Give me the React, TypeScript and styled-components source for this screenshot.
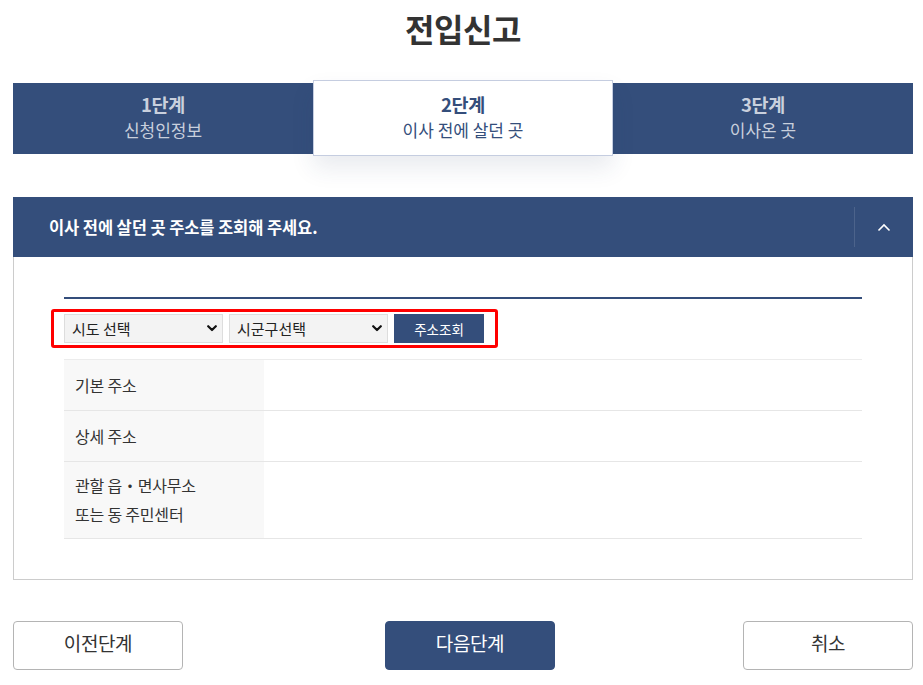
import React from "react";
import styled, { createGlobalStyle, css } from "styled-components";

const NAVY = "#344e7b";

const GlobalStyle = createGlobalStyle`
  html, body { margin: 0; padding: 0; background: #fff; }
  body { font-family: "Noto Sans CJK KR", "Noto Sans", sans-serif; color: #333; }
  * { box-sizing: border-box; }
`;

const Page = styled.div`
  width: 900px;
  margin-left: 13px;
  padding-top: 8px;
`;

const Title = styled.h1`
  margin: 0 0 35px;
  text-align: center;
  font-size: 32px;
  line-height: 40px;
  font-weight: 700;
  color: #333;
  letter-spacing: -0.5px;
`;

const Steps = styled.ol`
  list-style: none;
  margin: 0;
  padding: 0;
  display: grid;
  grid-template-columns: 300px 300px 300px;
  height: 71px;
  background: ${NAVY};
`;

const Step = styled.li<{ $active?: boolean }>`
  display: flex;
  flex-direction: column;
  align-items: center;
  justify-content: center;
  padding-bottom: 4px;
  color: #c9d0dd;
  ${(p) =>
    p.$active &&
    css`
      margin: -3px 0 -2px;
      padding-bottom: 3px;
      background: #fff;
      border: 1px solid #c5cde0;
      box-shadow: 0 12px 22px rgba(40, 60, 100, 0.1);
      color: ${NAVY};
    `}
`;

const StepNum = styled.span`
  font-size: 18.5px;
  line-height: 26px;
  font-weight: 700;
  letter-spacing: -0.3px;
`;

const StepName = styled.span`
  font-size: 17px;
  line-height: 25px;
  font-weight: 400;
  letter-spacing: 0;
`;

const Panel = styled.section`
  margin-top: 43px;
`;

const PanelHeader = styled.div`
  height: 60px;
  background: ${NAVY};
  display: flex;
  align-items: center;
  padding-left: 36px;
`;

const PanelTitle = styled.h2`
  flex: 1;
  margin: 0;
  font-size: 16.5px;
  font-weight: 700;
  color: #fff;
  letter-spacing: -0.1px;
`;

const Toggle = styled.button`
  width: 59px;
  height: 40px;
  border: 0;
  border-left: 1px solid rgba(255, 255, 255, 0.12);
  background: transparent;
  display: flex;
  align-items: center;
  justify-content: center;
  padding: 0;
  cursor: pointer;
`;

const PanelBody = styled.div`
  border: 1px solid #cccccc;
  border-top: 0;
  padding: 40px 50px 40px;
`;

const Rule = styled.div`
  height: 2px;
  background: ${NAVY};
`;

const SearchRow = styled.div`
  position: relative;
  display: flex;
  gap: 6px;
  margin-top: 15px;
  width: fit-content;
`;

const Highlight = styled.div`
  position: absolute;
  left: -13px;
  top: -5px;
  right: -14px;
  bottom: -5px;
  border: 3px solid #ff0000;
  border-radius: 3px;
  pointer-events: none;
`;

const SelectBox = styled.div`
  position: relative;
  width: 159px;
  height: 29px;
`;

const Select = styled.select`
  appearance: none;
  -webkit-appearance: none;
  width: 100%;
  height: 100%;
  background: #f3f3f3;
  border: 1px solid #dddddd;
  border-radius: 0;
  padding: 0 24px 0 7px;
  font-family: "Noto Sans CJK KR", "Noto Sans", sans-serif;
  font-size: 15px;
  color: #222;
  outline: none;
`;

const Caret = styled.svg`
  position: absolute;
  right: 6px;
  top: 11px;
  pointer-events: none;
`;

const SearchButton = styled.button`
  width: 90px;
  height: 29px;
  border: 0;
  background: ${NAVY};
  color: #fff;
  font-family: "Noto Sans CJK KR", "Noto Sans", sans-serif;
  font-size: 13.5px;
  padding: 0;
  cursor: pointer;
`;

const Table = styled.div`
  margin-top: 16px;
  border-top: 1px solid #ececec;
`;

const Row = styled.div`
  display: grid;
  grid-template-columns: 200px 1fr;
  border-bottom: 1px solid #e6e6e6;
`;

const Label = styled.div<{ $tall?: boolean }>`
  background: #f8f8f8;
  min-height: ${(p) => (p.$tall ? "76px" : "50px")};
  display: flex;
  align-items: center;
  padding: 0 11px;
  font-size: 16px;
  line-height: 29px;
  color: #333;
  letter-spacing: -0.2px;
`;

const Value = styled.div``;

const Footer = styled.div`
  margin-top: 41px;
  display: flex;
  justify-content: space-between;
  padding-bottom: 16px;
`;

const ActionButton = styled.button<{ $primary?: boolean; $shift?: number }>`
  width: 170px;
  height: 49px;
  border-radius: 4px;
  font-family: "Noto Sans CJK KR", "Noto Sans", sans-serif;
  font-size: 19px;
  letter-spacing: -0.4px;
  padding: 0 0 6px;
  cursor: pointer;
  margin-left: ${(p) => p.$shift ?? 0}px;
  ${(p) =>
    p.$primary
      ? css`
          background: ${NAVY};
          border: 1px solid ${NAVY};
          color: #fff;
        `
      : css`
          background: #fff;
          border: 1px solid #b4b4b4;
          color: #333;
        `}
`;

const steps = [
  { num: "1단계", name: "신청인정보" },
  { num: "2단계", name: "이사 전에 살던 곳", active: true },
  { num: "3단계", name: "이사온 곳" },
];

const CaretIcon = () => (
  <Caret width="10" height="7" viewBox="0 0 10 7">
    <path d="M1.2 1.2 L5 5 L8.8 1.2" fill="none" stroke="#111" strokeWidth="2.2" strokeLinecap="round" strokeLinejoin="round" />
  </Caret>
);

export default function App() {
  return (
    <>
      <GlobalStyle />
      <Page>
        <Title>전입신고</Title>
        <Steps>
          {steps.map((s) => (
            <Step key={s.num} $active={s.active}>
              <StepNum>{s.num}</StepNum>
              <StepName>{s.name}</StepName>
            </Step>
          ))}
        </Steps>

        <Panel>
          <PanelHeader>
            <PanelTitle>이사 전에 살던 곳 주소를 조회해 주세요.</PanelTitle>
            <Toggle aria-label="접기">
              <svg width="14" height="9" viewBox="0 0 14 9">
                <path d="M1.5 7.5 L7 2 L12.5 7.5" fill="none" stroke="#fff" strokeWidth="1.6" />
              </svg>
            </Toggle>
          </PanelHeader>
          <PanelBody>
            <Rule />
            <SearchRow>
              <SelectBox>
                <Select defaultValue="">
                  <option value="">시도 선택</option>
                </Select>
                <CaretIcon />
              </SelectBox>
              <SelectBox>
                <Select defaultValue="">
                  <option value="">시군구선택</option>
                </Select>
                <CaretIcon />
              </SelectBox>
              <SearchButton>주소조회</SearchButton>
              <Highlight />
            </SearchRow>
            <Table>
              <Row>
                <Label>기본 주소</Label>
                <Value />
              </Row>
              <Row>
                <Label>상세 주소</Label>
                <Value />
              </Row>
              <Row>
                <Label $tall>
                  관할 읍・면사무소
                  <br />
                  또는 동 주민센터
                </Label>
                <Value />
              </Row>
            </Table>
          </PanelBody>
        </Panel>

        <Footer>
          <ActionButton>이전단계</ActionButton>
          <ActionButton $primary $shift={14}>다음단계</ActionButton>
          <ActionButton>취소</ActionButton>
        </Footer>
      </Page>
    </>
  );
}
